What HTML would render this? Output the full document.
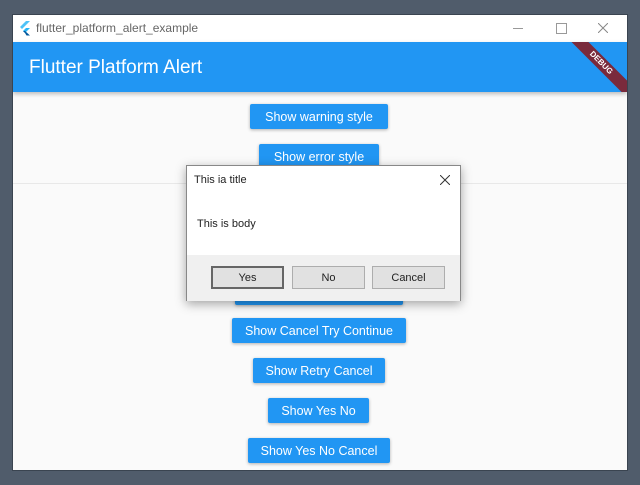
<!DOCTYPE html>
<html><head><style>
body{margin:0;width:640px;height:485px;background:#505c6b;position:relative;overflow:hidden;font-family:"Segoe UI","Liberation Sans",sans-serif}
.win{position:absolute;left:12px;top:14px;width:616px;height:457px;background:#fafafa;border:1px solid #3a4450;box-sizing:border-box;overflow:hidden}
.tb{position:absolute;left:0;top:0;width:100%;height:27px;background:#fff;font-size:12px;color:#666}
.bar{position:absolute;left:0;top:27px;width:100%;height:50px;background:#2196f3;box-shadow:0 2px 4px rgba(0,0,0,.25);color:#fff;font-size:19px;overflow:hidden}
.btn{position:absolute;background:#2196f3;color:#fff;font-size:12.5px;border-radius:2px;box-shadow:0 1px 3px rgba(0,0,0,.3);display:flex;align-items:center;justify-content:center;height:25px}
.dlg{position:absolute;left:186px;top:165px;width:275px;height:136px;background:#fff;border:1px solid #888;box-sizing:border-box;box-shadow:0 3px 10px rgba(0,0,0,.35);font-size:11px;color:#222}
.db{position:absolute;top:100px;width:73px;height:23px;background:#e1e1e1;border:1px solid #adadad;box-sizing:border-box;display:flex;align-items:center;justify-content:center}
</style></head><body>
<div class="win">
 <div class="tb">
  <svg style="position:absolute;left:6px;top:6px" width="12" height="15" viewBox="0 0 12 15"><path d="M7 0h4L3 8 1 6z" fill="#4fc3f7"/><path d="M7 7h4L6 12l-2-2z" fill="#29b6f6"/><path d="M4 10l2 2 1.5 2.5H11L6 10z" fill="#01579b"/></svg>
  <span style="position:absolute;left:23px;top:6px">flutter_platform_alert_example</span>
  <div style="position:absolute;left:500px;top:13px;width:10px;height:1px;background:#999"></div>
  <div style="position:absolute;left:543px;top:8px;width:9px;height:9px;border:1px solid #999"></div>
  <svg style="position:absolute;left:585px;top:8px" width="10" height="10" viewBox="0 0 10 10"><path d="M0 0L10 10M10 0L0 10" stroke="#888" stroke-width="1"/></svg>
 </div>
 <div class="bar"><span style="position:absolute;left:16px;top:15px">Flutter Platform Alert</span>
  <div style="position:absolute;left:548px;top:15px;width:80px;height:12px;background:#7a2a3c;transform:rotate(45deg);color:#fff;font-size:8px;font-weight:bold;text-align:center;line-height:12px">DEBUG</div>
 </div>
 <div style="position:absolute;left:0;top:168px;width:100%;height:1px;background:#e8e8e8"></div>
</div>
<div class="btn" style="left:250px;top:104px;width:138px">Show warning style</div>
<div class="btn" style="left:259px;top:144px;width:120px">Show error style</div>
<div class="btn" style="left:235px;top:280px;width:168px"></div>
<div class="btn" style="left:232px;top:318px;width:174px">Show Cancel Try Continue</div>
<div class="btn" style="left:253px;top:358px;width:132px">Show Retry Cancel</div>
<div class="btn" style="left:268px;top:398px;width:101px">Show Yes No</div>
<div class="btn" style="left:248px;top:438px;width:142px">Show Yes No Cancel</div>
<div class="dlg">
 <span style="position:absolute;left:7px;top:8px">This ia title</span>
 <svg style="position:absolute;left:253px;top:9px" width="10" height="10" viewBox="0 0 10 10"><path d="M0 0L10 10M10 0L0 10" stroke="#333" stroke-width="1"/></svg>
 <span style="position:absolute;left:10px;top:52px">This is body</span>
 <div style="position:absolute;left:0;top:89px;width:100%;height:46px;background:#f0f0f0"></div>
 <div class="db" style="left:24px;border:2px solid #666">Yes</div>
 <div class="db" style="left:105px">No</div>
 <div class="db" style="left:185px">Cancel</div>
</div>
</body></html>
